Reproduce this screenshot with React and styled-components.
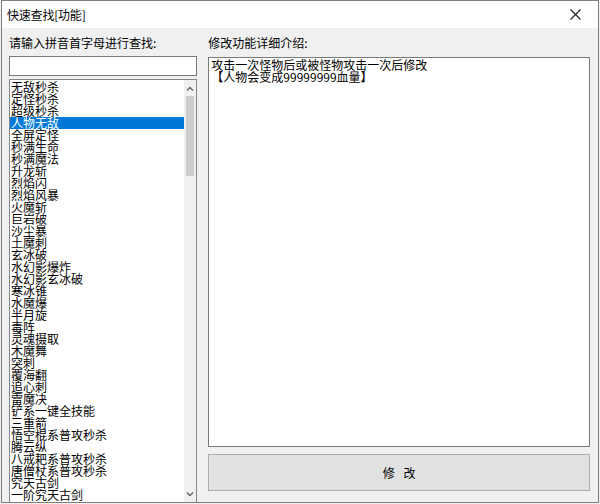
import React, { useState } from 'react';
import styled, { createGlobalStyle } from 'styled-components';

const GlobalStyle = createGlobalStyle`
  html, body {
    margin: 0;
    padding: 0;
    background: #f0f0f0;
  }
  * {
    box-sizing: border-box;
  }
`;

const Window = styled.div`
  width: 598px;
  height: 503px;
  border: 1px solid #7f7f7f;
  margin-left: 1px;
  background: #f0f0f0;
  display: flex;
  flex-direction: column;
  font-family: "Noto Sans CJK SC", "Liberation Sans", sans-serif;
  font-size: 12px;
  color: #000;
  overflow: hidden;
`;

const TitleBar = styled.div`
  height: 27px;
  flex: none;
  background: #fff;
  display: flex;
  align-items: center;
  justify-content: space-between;
  padding: 0 8px 0 5px;
`;

const Title = styled.span`
  font-size: 12px;
  letter-spacing: -0.2px;
`;

const CloseButton = styled.button`
  width: 30px;
  height: 26px;
  border: none;
  background: transparent;
  display: flex;
  align-items: center;
  justify-content: center;
  padding: 0;
  cursor: pointer;
`;

const Body = styled.div`
  flex: 1;
  display: flex;
  gap: 11px;
  padding: 9px 8px 0 7px;
  min-height: 0;
`;

const Column = styled.div`
  width: ${p => p.$width}px;
  display: flex;
  flex-direction: column;
  min-height: 0;
`;

const Label = styled.div`
  height: 12px;
  line-height: 12px;
  margin-bottom: ${p => p.$gap}px;
  white-space: nowrap;
`;

const SearchInput = styled.input`
  height: 20px;
  width: 100%;
  border: 1px solid #7a7a7a;
  background: #fff;
  outline: none;
  padding: 0 3px;
  font: inherit;
  margin-bottom: 3px;
`;

const ListBox = styled.div`
  flex: 1;
  min-height: 0;
  border: 1px solid #828790;
  border-bottom: none;
  background: #fff;
  display: flex;
  overflow: hidden;
`;

const Items = styled.div`
  flex: 1;
  padding-top: 1px;
  overflow: hidden;
`;

const Item = styled.div`
  height: 12px;
  line-height: 12px;
  padding-left: 1px;
  white-space: nowrap;
  background: ${p => (p.$selected ? '#0078d7' : 'transparent')};
  color: ${p => (p.$selected ? '#fff' : '#000')};
  cursor: default;
`;

const ScrollBar = styled.div`
  width: 12px;
  flex: none;
  background: #f0f0f0;
  display: flex;
  flex-direction: column;
  align-items: center;
  padding: 2px 0;
`;

const Arrow = styled.div`
  height: 12px;
  width: 12px;
  display: flex;
  align-items: center;
  justify-content: center;
  flex: none;
`;

const Track = styled.div`
  flex: 1;
  width: 100%;
  display: flex;
  justify-content: center;
  padding-top: 2px;
`;

const Thumb = styled.div`
  width: 8px;
  height: 80px;
  background: #cdcdcd;
`;

const Description = styled.textarea`
  height: 390px;
  width: 100%;
  border: 1px solid #7a7a7a;
  background: #fff;
  resize: none;
  outline: none;
  font: inherit;
  line-height: 12px;
  padding: 1px 2px;
  margin: 0 0 7px;
  overflow: hidden;
  display: block;
`;

const ActionButton = styled.button`
  height: 37px;
  width: 100%;
  background: #e1e1e1;
  border: 1px solid #adadad;
  font: inherit;
  font-size: 12px;
  word-spacing: 6px;
  color: #000;
  cursor: pointer;
`;

const skills = [
  '无敌秒杀', '定怪秒杀', '超级秒杀', '人物无敌', '全屏定怪', '秒满生命', '秒满魔法',
  '升龙斩', '烈焰闪', '烈焰风暴', '火魔斩', '巨岩破', '沙尘暴', '土魔刺', '玄冰破',
  '水幻影爆炸', '水幻影玄冰破', '寒冰锥', '水魔爆', '半月旋', '毒阵', '灵魂摄取',
  '木魔舞', '突刺', '覆海翻', '追心刺', '雷魔决', '铲系一键全技能', '三重箭',
  '悟空棍系普攻秒杀', '腾云纵', '八戒耙系普攻秒杀', '唐僧杖系普攻秒杀', '究天古剑',
  '一阶究天古剑',
];

const Chevron = ({ up }) => (
  <svg width="8" height="5" viewBox="0 0 8 5">
    <path
      d={up ? 'M1 4.5 L4 1.5 L7 4.5' : 'M1 0.5 L4 3.5 L7 0.5'}
      fill="none"
      stroke="#606060"
      strokeWidth="1.3"
    />
  </svg>
);

const App = () => {
  const [selected, setSelected] = useState(3);

  return (
    <>
      <GlobalStyle />
      <Window>
        <TitleBar>
          <Title>快速查找[功能]</Title>
          <CloseButton aria-label="关闭">
            <svg width="11" height="11" viewBox="0 0 11 11">
              <path d="M0.5 0.5 L10.5 10.5 M10.5 0.5 L0.5 10.5" stroke="#222" strokeWidth="1.1" />
            </svg>
          </CloseButton>
        </TitleBar>
        <Body>
          <Column $width={189}>
            <Label $gap={7}>请输入拼音首字母进行查找:</Label>
            <SearchInput />
            <ListBox>
              <Items>
                {skills.map((name, i) => (
                  <Item key={name} $selected={i === selected} onClick={() => setSelected(i)}>
                    {name}
                  </Item>
                ))}
              </Items>
              <ScrollBar>
                <Arrow><Chevron up /></Arrow>
                <Track><Thumb /></Track>
                <Arrow><Chevron /></Arrow>
              </ScrollBar>
            </ListBox>
          </Column>
          <Column $width={383}>
            <Label $gap={8}>修改功能详细介绍:</Label>
            <Description
              readOnly
              value={'攻击一次怪物后或被怪物攻击一次后修改\n【人物会变成99999999血量】'}
            />
            <ActionButton>修 改</ActionButton>
          </Column>
        </Body>
      </Window>
    </>
  );
};

export default App;
